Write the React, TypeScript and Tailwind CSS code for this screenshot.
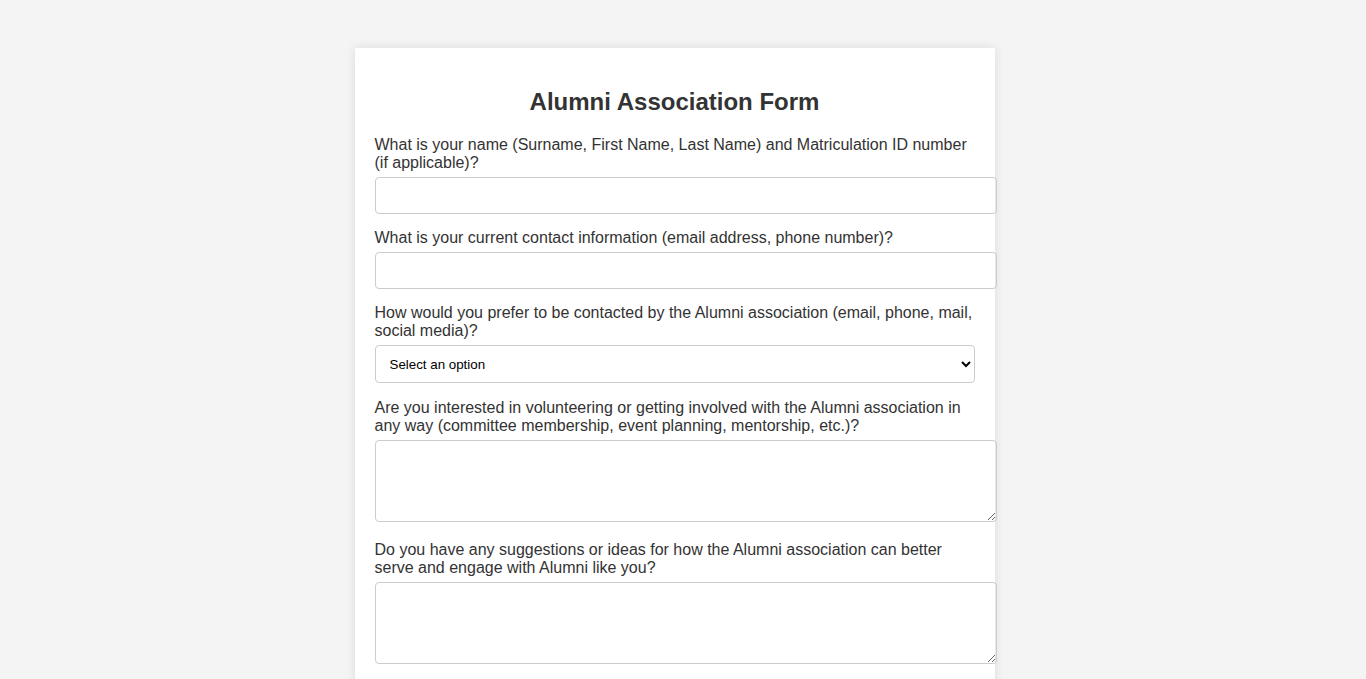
const questions = [
  {
    label:
      "What is your name (Surname, First Name, Last Name) and Matriculation ID number (if applicable)?",
    type: "input",
  },
  {
    label: "What is your current contact information (email address, phone number)?",
    type: "input",
  },
  {
    label:
      "How would you prefer to be contacted by the Alumni association (email, phone, mail, social media)?",
    type: "select",
  },
  {
    label:
      "Are you interested in volunteering or getting involved with the Alumni association in any way (committee membership, event planning, mentorship, etc.)?",
    type: "textarea",
  },
  {
    label:
      "Do you have any suggestions or ideas for how the Alumni association can better serve and engage with Alumni like you?",
    type: "textarea",
  },
  {
    label: "What events or activities would you like the Alumni association to organize?",
    type: "textarea",
  },
];

export default function App() {
  return (
    // right padding leaves room where the browser's scrollbar sat in the original
    <div className="min-h-screen bg-[#f4f4f4] py-12 pr-[17px] font-['Liberation_Sans',Arial,sans-serif] text-[#333]">
      <form className="mx-auto max-w-[640px] bg-white p-5 shadow-[0_0_10px_rgba(0,0,0,0.1)]">
        <h2 className="my-5 text-center text-[24px] font-bold leading-[normal]">
          Alumni Association Form
        </h2>

        {questions.map((q, i) => (
          <div key={i}>
            <label className="mb-[5px] block text-[16px] leading-[normal]">{q.label}</label>
            {q.type === "input" && (
              <input
                type="text"
                className="mb-[15px] box-content block w-full rounded-[4px] border border-[#ccc] p-2.5 text-[13.333px] leading-[normal]"
              />
            )}
            {q.type === "select" && (
              <select className="mb-[16px] block h-[38px] w-full rounded-[4px] border border-[#ccc] px-2.5 text-[13.333px] leading-[normal] text-black">
                <option>Select an option</option>
                <option>Email</option>
                <option>Phone</option>
                <option>Mail</option>
                <option>Social media</option>
              </select>
            )}
            {q.type === "textarea" && (
              <textarea className="mb-[19px] box-content block h-[60px] w-full rounded-[4px] border border-[#ccc] p-2.5 text-[13.333px] leading-[normal]" />
            )}
          </div>
        ))}

        <button
          type="submit"
          className="mt-2 rounded-[4px] bg-[#4caf50] px-5 py-2.5 text-[16px] text-white"
        >
          Submit
        </button>
      </form>
    </div>
  );
}
